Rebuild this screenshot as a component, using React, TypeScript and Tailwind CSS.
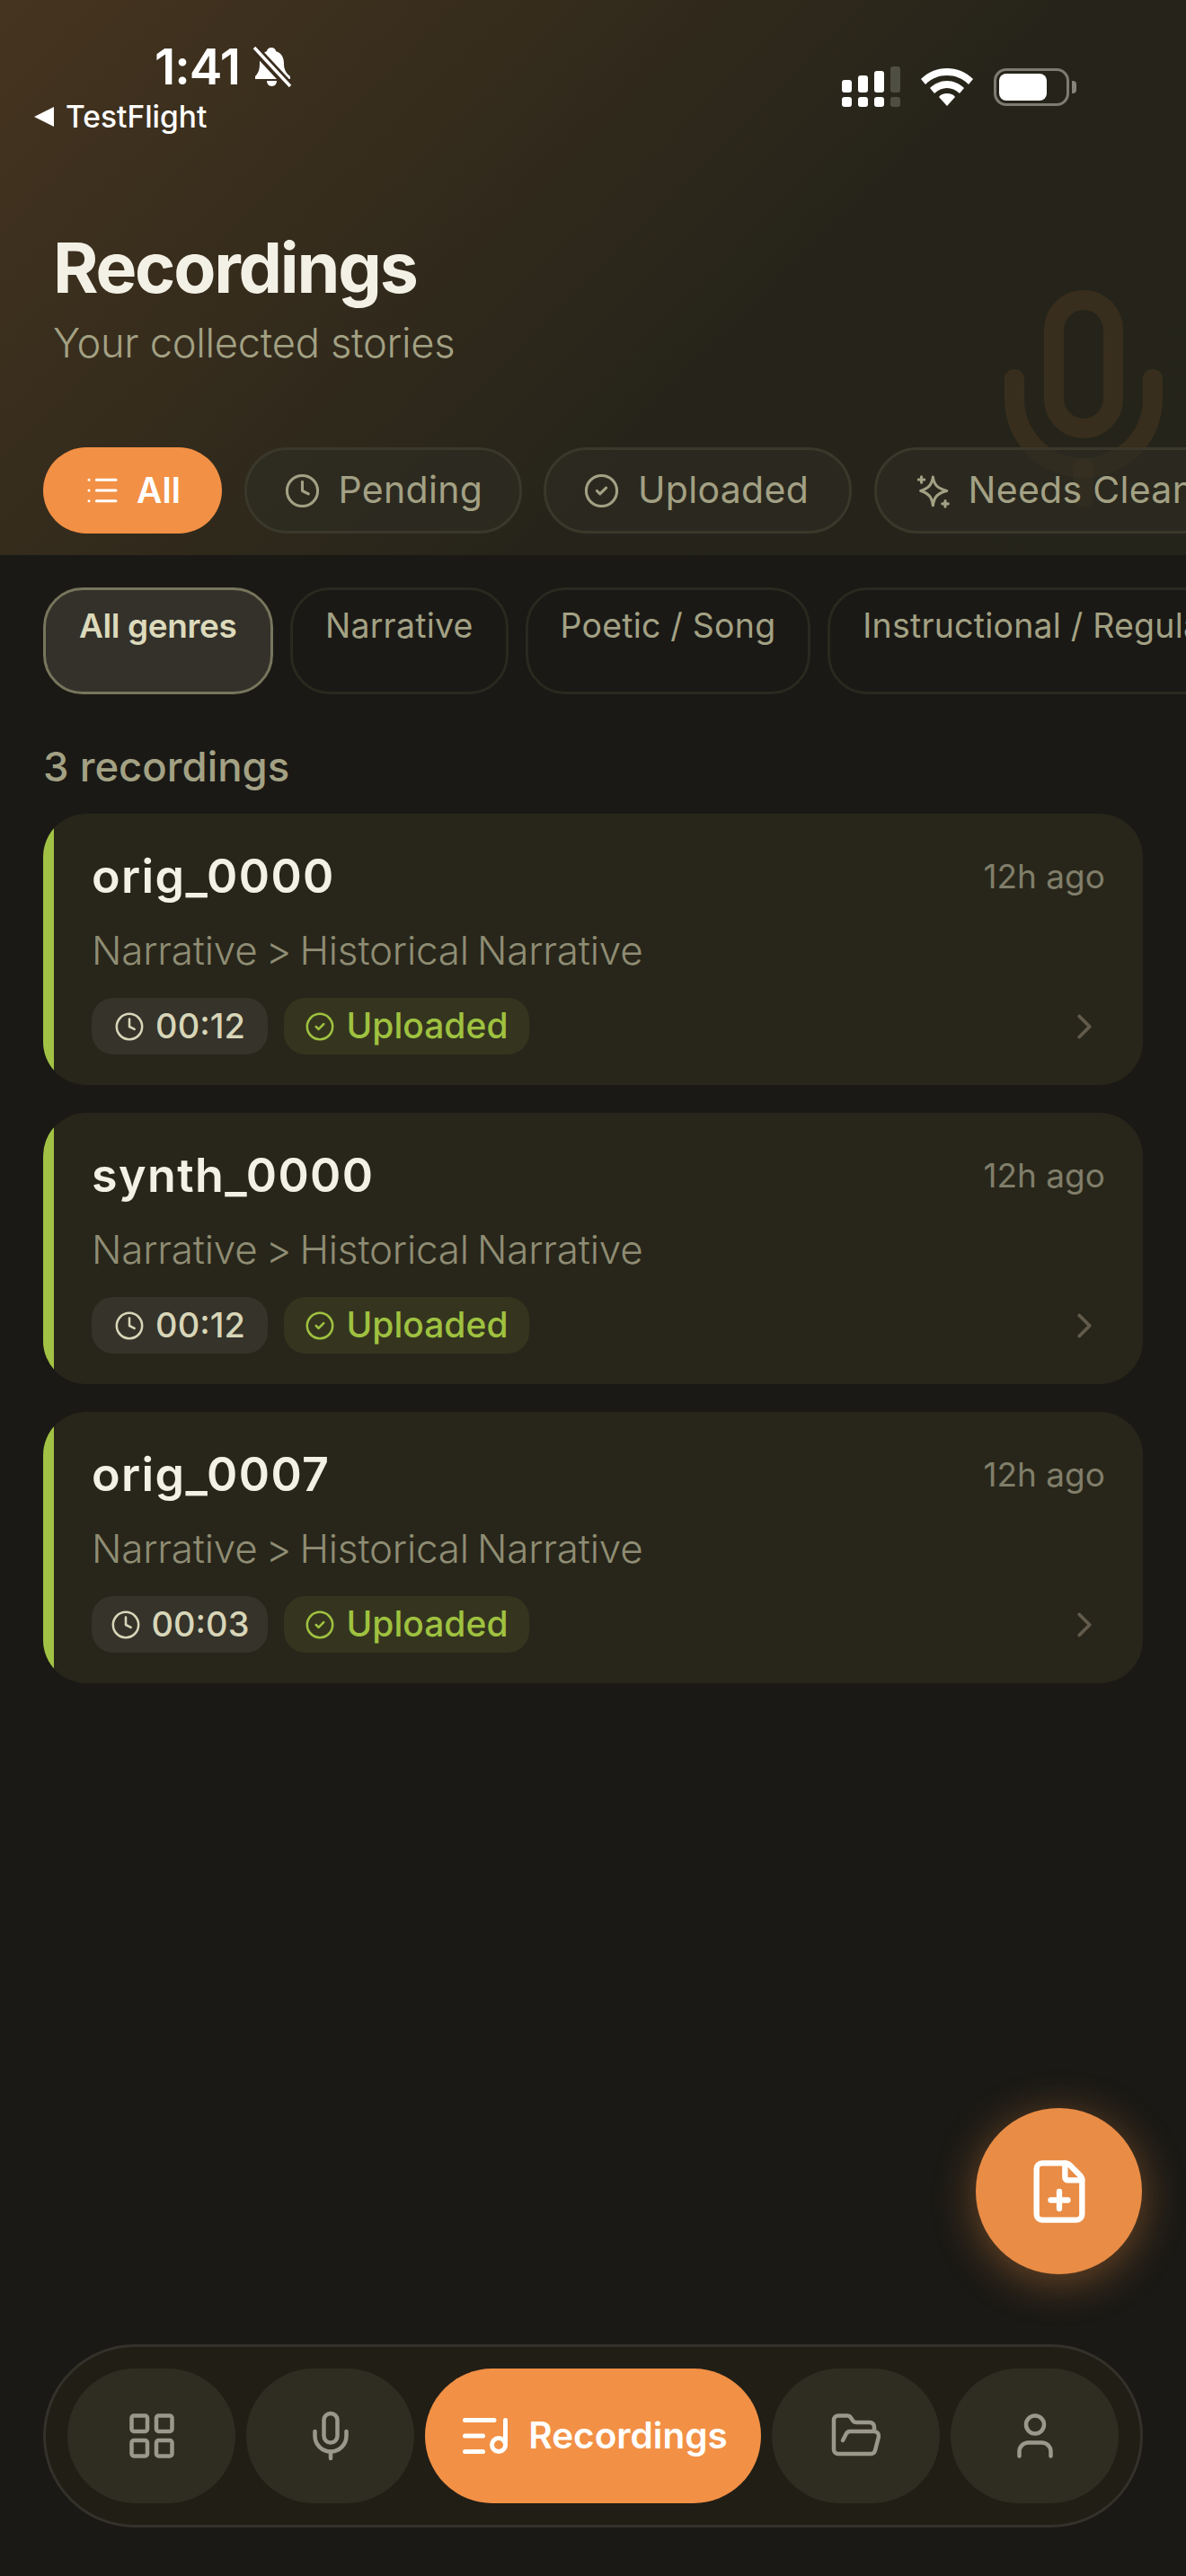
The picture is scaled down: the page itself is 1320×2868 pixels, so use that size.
import { ChevronRight, CircleCheck, Clock, FilePlus, FolderOpen, LayoutGrid, List, ListMusic, Mic, User } from "lucide-react";
import type { ComponentType } from "react";

const sans = "font-['Inter',sans-serif]";

function CleanIcon({ size = 41, strokeWidth = 1.8 }: { size?: number; strokeWidth?: number }) {
  return (
    <svg width={size} height={size} viewBox="0 0 24 24" fill="none" stroke="currentColor" strokeWidth={strokeWidth} strokeLinecap="round" strokeLinejoin="round">
      <path d="M12.500 3c.7 5 2.900 7.400 9 9-6.100 1.600-8.300 4-9 9.500-.7-5.500-2.900-7.900-8-9.500 5.100-1.600 7.300-4 8-9Z" />
      <path d="M5 2.800v3.800M3.100 4.700h3.800" />
      <path d="M20.500 18.500v3.800M18.600 20.400h3.800" />
    </svg>
  );
}

const statusFilters: { label: string; icon: ComponentType<{ size?: number; strokeWidth?: number }>; width: string }[] = [
  { label: "Pending", icon: Clock, width: "w-[309px]" },
  { label: "Uploaded", icon: CircleCheck, width: "w-[343px]" },
  { label: "Needs Cleaning", icon: CleanIcon, width: "w-[470px]" },
];

const genres = ["Narrative", "Poetic / Song", "Instructional / Regulatory"];

const recordings = [
  { name: "orig_0000", duration: "00:12" },
  { name: "synth_0000", duration: "00:12" },
  { name: "orig_0007", duration: "00:03" },
];

function StatusBar() {
  return (
    <div className="flex h-[150px] items-start justify-between">
      <div className="flex w-[360px] shrink-0 flex-col pl-[38px] pt-[44px]">
        <div className="flex items-center pl-[134px] text-white">
          <span className="text-[55px] font-semibold leading-[60px] tracking-[-1px]">1:41</span>
          <svg viewBox="0 0 44 46" className="ml-[14px] h-[46px] w-[44px] shrink-0" fill="white">
            <path d="M21 2c3 0 5 2 5 4 7 2 9 8 9 14 0 6 2 10 7 14v3H3v-3c4-4 5-8 5-15 0-7 3-11 8-13 0-2 2-4 5-4ZM16 39h11c0 3-2 6-5.500 6S16 42 16 39Z" />
            <path d="M0 5l38 41" stroke="#3a2d1e" strokeWidth="4" />
            <path d="M2 2l40 43" stroke="#3a2d1e" strokeWidth="9" />
            <path d="M2 2l40 43" stroke="white" strokeWidth="3.500" />
          </svg>
        </div>
        <div className="mt-[7px] flex items-center gap-[13px] text-white">
          <svg viewBox="0 0 22 22" className="h-[22px] w-[22px] shrink-0" fill="white">
            <path d="M22 0v22L0 11Z" />
          </svg>
          <span className="text-[33.500px] font-medium leading-[38px]">TestFlight</span>
        </div>
      </div>
      <div className="flex items-center pr-[122px] pt-[74px]">
        <svg viewBox="0 0 65 45" className="h-[45px] w-[65px]">
          <g fill="white">
            <rect x="0" y="15" width="11" height="14" rx="3" />
            <rect x="18" y="10" width="11" height="19" rx="3" />
            <rect x="36" y="5" width="11" height="24" rx="3" />
            <rect x="0" y="34" width="11" height="11" rx="3" />
            <rect x="18" y="34" width="11" height="11" rx="3" />
            <rect x="36" y="34" width="11" height="11" rx="3" />
          </g>
          <g fill="#4f4e43">
            <rect x="54" y="0" width="11" height="29" rx="3" />
            <rect x="54" y="34" width="11" height="11" rx="3" />
          </g>
        </svg>
        <svg viewBox="0 0 58 42" className="ml-[23px] h-[42px] w-[58px]" fill="white">
          <path d="M29 0c11 0 21 4 29 12l-5 6C46 11 38 8 29 8S12 11 5 18l-5-6C8 4 18 0 29 0Z" />
          <path d="M29 14c7 0 14 3 19 8l-5 6c-4-4-9-6-14-6s-10 2-14 6l-5-6c5-5 12-8 19-8Z" />
          <path d="M29 28c4 0 7 1 9 4L29 42l-9-10c2-3 5-4 9-4Z" />
        </svg>
        <div className="ml-[23px] flex items-center">
          <div className="h-[42px] w-[84px] rounded-[14px] border-[3px] border-[#7d7c73] p-[3px]">
            <div className="h-full w-[53px] rounded-[8px] bg-white" />
          </div>
          <div className="ml-[3px] h-[14px] w-[5px] rounded-r-[4px] bg-[#85847b]" />
        </div>
      </div>
    </div>
  );
}

function Header() {
  return (
    <header className="relative h-[618px] shrink-0 overflow-hidden bg-[linear-gradient(135deg,#45341f_0%,#26241a_62%,#25241a_100%)]">
      <Mic
        size={264}
        strokeWidth={2}
        className="absolute left-[1074px] top-[312px] text-[#f2904418]"
      />
      <div className="relative">
        <StatusBar />
        <div className="px-[59px] pt-[101px]">
          <h1 className="text-[77px] font-bold leading-[94px] tracking-[-2.2px] text-[#f3f1e6]">Recordings</h1>
          <p className="mt-[9px] text-[45.300px] font-light leading-[56px] tracking-[-0.3px] text-[#a3a184]">Your collected stories</p>
        </div>
        <div className="mt-[88px] flex gap-[24.500px] overflow-hidden pl-[48px]">
          <div className="flex h-[96px] w-[199px] shrink-0 items-center justify-center gap-[18px] rounded-full bg-[#f29045] text-white">
            <List size={40} strokeWidth={1.8} />
            <span className="text-[39px] font-semibold">All</span>
          </div>
          {statusFilters.map(({ label, icon: Icon, width }) => (
            <div
              key={label}
              className={`flex h-[96px] shrink-0 items-center gap-[20px] rounded-full border-[3px] border-[#3a382b] bg-[#2e2c22b3] pl-[41px] text-[#a3a184] ${width}`}
            >
              <Icon size={41} strokeWidth={1.8} />
              <span className="text-[41px] font-normal tracking-[0.3px]">{label}</span>
            </div>
          ))}
        </div>
      </div>
    </header>
  );
}

function RecordingCard({ name, duration }: { name: string; duration: string }) {
  return (
    <div className="flex h-[302px] overflow-hidden rounded-[48px] bg-[#28261a]">
      <div className="w-[12px] shrink-0 bg-[#a1c244]" />
      <div className="flex min-w-0 flex-1 flex-col pl-[42px] pr-[42px] pt-[35px]">
        <div className="flex items-center justify-between">
          <span className="text-[52px] font-semibold leading-[70px] tracking-[1.400px] text-[#f3f1e6]">{name}</span>
          <span className="text-[37px] leading-[70px] text-[#807e6a]">12h ago</span>
        </div>
        <div className="mt-[19px] text-[44px] font-light leading-[56px] tracking-[-0.2px] text-[#8f8d74] [word-spacing:-3px]">
          Narrative &gt; Historical Narrative
        </div>
        <div className="mt-[25px] flex items-center">
          <div className="flex h-[63px] w-[196px] items-center justify-center gap-[12px] rounded-[24px] bg-[#35332a] text-[#d8d6b8]">
            <Clock size={34} strokeWidth={1.8} />
            <span className="text-[38px] font-medium">{duration}</span>
          </div>
          <div className="ml-[18px] flex h-[63px] w-[273px] items-center justify-center gap-[12px] rounded-[24px] bg-[#35351f] text-[#9fc240]">
            <CircleCheck size={34} strokeWidth={1.8} />
            <span className="text-[39px] font-medium">Uploaded</span>
          </div>
          <ChevronRight size={46} strokeWidth={2} className="ml-auto text-[#625b4c]" />
        </div>
      </div>
    </div>
  );
}

function BottomNav() {
  const idle = "flex h-[150px] w-[187px] shrink-0 items-center justify-center rounded-full bg-[#2f2c21] text-[#9a988a]";
  return (
    <nav className="mx-[48px] flex h-[204px] items-center gap-[12px] rounded-full border-[3px] border-[#33312a] bg-[#211e16] pl-[24px]">
      <div className={idle}>
        <LayoutGrid size={60} strokeWidth={1.8} />
      </div>
      <div className={idle}>
        <Mic size={60} strokeWidth={1.8} />
      </div>
      <div className="flex h-[150px] w-[374px] shrink-0 items-center justify-center gap-[18px] rounded-full bg-[#f29045] text-white">
        <ListMusic size={60} strokeWidth={2} />
        <span className="text-[40.500px] font-semibold">Recordings</span>
      </div>
      <div className={idle}>
        <FolderOpen size={60} strokeWidth={1.8} />
      </div>
      <div className={idle}>
        <User size={60} strokeWidth={1.8} />
      </div>
    </nav>
  );
}

export default function App() {
  return (
    <div className={`flex h-[2868px] w-[1320px] flex-col overflow-hidden bg-[#1a1915] ${sans}`}>
      <Header />
      <div className="mt-[36px] flex h-[119px] shrink-0 gap-[19px] overflow-hidden pl-[48px]">
        <div className="w-[256px] shrink-0 rounded-[44px] border-[3px] border-[#77755c] bg-[#33312a] pl-[37px] pt-[15px] text-[37px] font-semibold leading-[50px] tracking-[-0.4px] text-[#dcdabb]">
          All genres
        </div>
        {genres.map((genre) => (
          <div
            key={genre}
            className="shrink-0 rounded-[44px] border-[3px] border-[#2a291f] px-[36px] pt-[15px] text-[37.500px] leading-[50px] tracking-[0.2px] text-[#a3a184]"
          >
            {genre}
          </div>
        ))}
      </div>
      <div className="mt-[56px] px-[48px] text-[45.500px] font-medium leading-[50px] text-[#a3a184]">3 recordings</div>
      <div className="mt-[27px] flex flex-col gap-[31px] px-[48px]">
        {recordings.map((r) => (
          <RecordingCard key={r.name} {...r} />
        ))}
      </div>
      <div className="mt-auto flex justify-end px-[49px]">
        <div className="flex h-[185px] w-[185px] items-center justify-center rounded-full bg-[#e98c45] text-white shadow-[0_8px_48px_#f2904466]">
          <FilePlus size={76} strokeWidth={2} />
        </div>
      </div>
      <div className="mb-[54px] mt-[78px]">
        <BottomNav />
      </div>
    </div>
  );
}
